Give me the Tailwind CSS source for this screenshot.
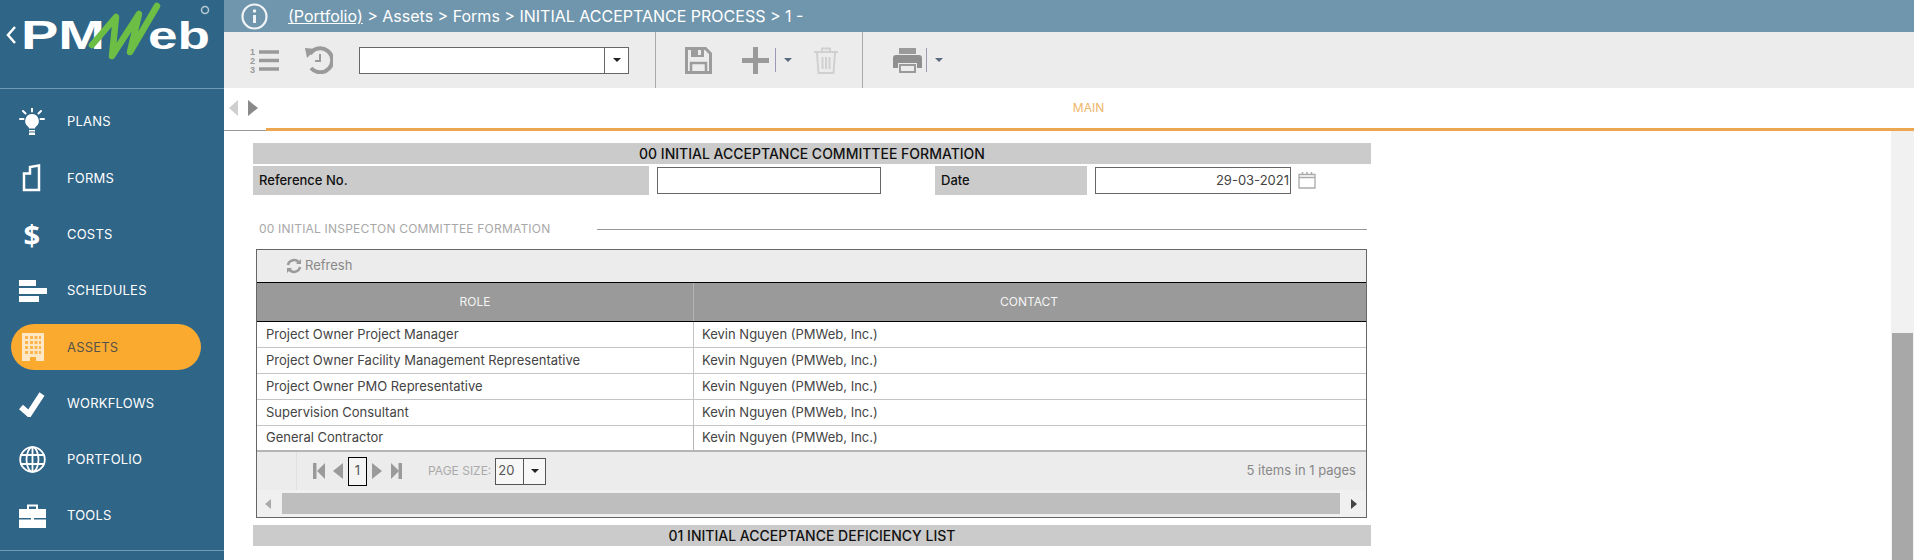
<!DOCTYPE html>
<html lang="en">
<head>
    <meta charset="UTF-8">
    <title>PMWeb - Initial Acceptance Process</title>
    <script src="https://cdn.jsdelivr.net/npm/@tailwindcss/browser@4"></script>
</head>
<body class="h-[560px] overflow-hidden bg-white font-['Inter',sans-serif] text-[#333]">
<div class="flex h-[560px]">

    <!-- Sidebar -->
    <aside class="w-[224px] shrink-0 bg-[#2f6587] text-white">
        <div class="h-[89px] border-b border-[#6f9ab3]">
            <svg width="224" height="88" viewBox="0 0 224 88">
                <path d="M15 27 L8 35 L15 43" fill="none" stroke="#fff" stroke-width="2.5"/>
                <text x="21" y="49" font-family="Liberation Sans" font-weight="700" font-size="40" fill="#fff" textLength="84" lengthAdjust="spacingAndGlyphs">PM</text>
                <text x="148" y="49" font-family="Liberation Sans" font-weight="700" font-size="38" fill="#fff" textLength="62" lengthAdjust="spacingAndGlyphs">eb</text>
                <path d="M92 45 L116 17 L112 56 L139 14 L130 52 L157 6" fill="none" stroke="#6cbe45" stroke-width="6.5" stroke-linejoin="round" stroke-linecap="round"/>
                <circle cx="205" cy="10" r="3.5" fill="none" stroke="#b8c9d4" stroke-width="1.5"/>
            </svg>
        </div>
        <nav class="pt-[5px] text-[13px] font-normal tracking-[0.2px]">
            <div class="flex h-[56.3px] items-center pl-[19px]">
                <svg class="w-[26px] h-[28px] mr-[22px]" viewBox="0 0 26 28" fill="#fff"><path d="M13 6a7 7 0 0 0-4 12.6c.7.6 1 1.2 1 2h6c0-.8.3-1.4 1-2A7 7 0 0 0 13 6zM10 22h6v1.500h-6zM10 24.500h6V27h-6z"/><path d="M13 0v3.500M4 3l2.500 2.500M22 3l-2.500 2.500M1 11h3.500M21.500 11H25" stroke="#fff" stroke-width="2" stroke-linecap="round"/></svg>
                <span>PLANS</span>
            </div>
            <div class="flex h-[56.3px] items-center pl-[19px]">
                <svg class="w-[26px] h-[28px] mr-[22px]" viewBox="0 0 26 28"><path d="M5 9.500 L11 9.500 L11 3 L20 1.500 L20 26 L5 26 Z" transform="translate(0 0)" fill="none" stroke="#fff" stroke-width="2.500"/></svg>
                <span>FORMS</span>
            </div>
            <div class="flex h-[56.3px] items-center pl-[19px]">
                <span class="w-[26px] mr-[22px] text-center text-[29px] font-bold leading-none font-['Open_Sans',sans-serif]">$</span>
                <span>COSTS</span>
            </div>
            <div class="flex h-[56.3px] items-center pl-[19px]">
                <svg class="w-[28px] h-[23px] mr-[20px]" viewBox="0 0 28 23" fill="#fff"><rect x="0" y="0" width="17" height="6"/><rect x="0" y="8" width="28" height="6"/><rect x="0" y="16" width="20" height="6"/></svg>
                <span>SCHEDULES</span>
            </div>
            <div class="flex h-[56.3px] items-center pl-[11px]">
                <div class="flex h-[46px] w-[190px] items-center rounded-full bg-[#fbaa30] pl-[11px] text-[#55544a]">
                    <svg class="w-[22px] h-[28px] mr-[23px]" viewBox="0 0 22 28"><path fill="#fde7c4" d="M0 0h22v28h-8v-4h-6v4H0z"/><path fill="#fbb64e" d="M3 3h3v3H3zM8 3h3v3H8zM12.500 3h3v3h-3zM17 3h2v3h-2zM3 8h3v3H3zM8 8h3v3H8zM12.500 8h3v3h-3zM17 8h2v3h-2zM3 13h3v3H3zM8 13h3v3H8zM12.500 13h3v3h-3zM17 13h2v3h-2zM3 18h3v3H3zM8 18h3v3H8zM12.500 18h3v3h-3zM17 18h2v3h-2z"/></svg>
                    <span>ASSETS</span>
                </div>
            </div>
            <div class="flex h-[56.3px] items-center pl-[19px]">
                <svg class="w-[26px] h-[26px] mr-[22px]" viewBox="0 0 26 26"><path d="M2 16 L10 23 L23 3" fill="none" stroke="#fff" stroke-width="6"/></svg>
                <span>WORKFLOWS</span>
            </div>
            <div class="flex h-[56.3px] items-center pl-[19px]">
                <svg class="w-[27px] h-[27px] mr-[21px]" viewBox="0 0 27 27" fill="none" stroke="#fff" stroke-width="1.800"><circle cx="13.500" cy="13.500" r="12.300"/><ellipse cx="13.500" cy="13.500" rx="6" ry="12.300"/><path d="M13.500 1v25M1.500 9h24M1.500 18h24"/></svg>
                <span>PORTFOLIO</span>
            </div>
            <div class="flex h-[56.3px] items-center pl-[19px]">
                <svg class="w-[27px] h-[24px] mr-[21px]" viewBox="0 0 27 24" fill="#fff"><path d="M0 5h27v9H0zM0 15.500h27V24H0z"/><path d="M9 5V1.500h9V5" fill="none" stroke="#fff" stroke-width="2"/><rect x="12" y="13" width="3" height="3"/></svg>
                <span>TOOLS</span>
            </div>
        </nav>
        <div class="mt-[6px] border-t border-[#6f9ab3]"></div>
    </aside>

    <div class="flex min-w-0 flex-1 flex-col">
        <!-- Breadcrumb -->
        <header class="flex h-[32px] items-center bg-[#7096ad] pl-[17px] text-[16px] text-white">
            <svg class="w-[27px] h-[27px] mr-[20px]" viewBox="0 0 27 27" fill="none"><circle cx="13.500" cy="13.500" r="12" stroke="#f2f5f7" stroke-width="2.200"/><circle cx="13.500" cy="8" r="1.700" fill="#f2f5f7"/><path d="M13.500 12v8" stroke="#f2f5f7" stroke-width="3"/></svg>
            <span><u>(Portfolio)</u> &gt; Assets &gt; Forms &gt; INITIAL ACCEPTANCE PROCESS &gt; 1 -</span>
        </header>

        <!-- Toolbar -->
        <div class="flex h-[56px] items-center bg-[#ececec] pl-[26px]">
            <svg class="w-[29px] h-[27px] mr-[25px]" viewBox="0 0 29 27"><text x="0" y="8" font-family="Liberation Sans" font-size="9" font-weight="700" fill="#9a9a9a">1</text><text x="0" y="17" font-family="Liberation Sans" font-size="9" font-weight="700" fill="#9a9a9a">2</text><text x="0" y="26" font-family="Liberation Sans" font-size="9" font-weight="700" fill="#9a9a9a">3</text><path d="M9 5h20M9 13.500h20M9 22h20" stroke="#9a9a9a" stroke-width="3.500"/></svg>
            <svg class="w-[29px] h-[28px] mr-[26px]" viewBox="0 0 29 28" fill="none"><path d="M6 8a12 12 0 1 1 1 14" stroke="#9a9a9a" stroke-width="4"/><path d="M1 2l11 1-9 9z" fill="#9a9a9a"/><path d="M16 8v7h-5" stroke="#9a9a9a" stroke-width="2"/></svg>
            <div class="flex h-[27px] w-[270px] border border-[#666] bg-white">
                <div class="flex-1 border-r border-[#666]"></div>
                <div class="flex w-[23px] items-center justify-center"><div class="h-0 w-0 border-x-[4px] border-t-[4px] border-x-transparent border-t-[#222]"></div></div>
            </div>
            <div class="ml-[26px] h-[56px] border-l border-[#a9a9a9]"></div>
            <svg class="ml-[29px] w-[27px] h-[27px]" viewBox="0 0 27 27" fill="none"><path d="M1.500 1.500h19l5 5v19h-24z" stroke="#9c9c9c" stroke-width="3"/><path d="M6 2h13v8H6z" fill="#9c9c9c"/><rect x="13" y="3" width="3" height="5" fill="#ececec"/><path d="M6 25v-9h15v9" stroke="#9c9c9c" stroke-width="2.500"/></svg>
            <svg class="ml-[30px] w-[27px] h-[27px]" viewBox="0 0 27 27"><path d="M0 13.500h27M13.500 0v27" stroke="#9a9a9a" stroke-width="5"/></svg>
            <div class="ml-[6px] h-[24px] border-l border-[#9a9ab5]"></div>
            <div class="ml-[8px] h-0 w-0 border-x-[4px] border-t-[4px] border-x-transparent border-t-[#5c6a80]"></div>
            <svg class="ml-[22px] w-[24px] h-[27px]" viewBox="0 0 24 27" fill="none" stroke="#d0d0d0" stroke-width="2"><path d="M0 5h24M8 5V1.500h8V5M3 6l1.500 20h15L21 6M8.500 10v12M12 10v12M15.500 10v12"/></svg>
            <div class="ml-[24px] h-[56px] border-l border-[#a9a9a9]"></div>
            <svg class="ml-[30px] w-[29px] h-[25px]" viewBox="0 0 29 25"><path d="M6 0h17v6H6z" fill="#9a9a9a"/><path d="M3 7h23a3 3 0 0 1 3 3v10h-5v-5H5v5H0V10a3 3 0 0 1 3-3z" fill="#8f8f8f"/><path d="M7 17h15v7H7z" fill="none" stroke="#9a9a9a" stroke-width="2"/></svg>
            <div class="ml-[4px] h-[24px] border-l border-[#9a9ab5]"></div>
            <div class="ml-[8px] h-0 w-0 border-x-[4px] border-t-[4px] border-x-transparent border-t-[#5c6a80]"></div>
        </div>

        <!-- Tab strip -->
        <div class="flex h-[43px] shrink-0 bg-white">
            <div class="flex w-[42px] items-center border-b border-[#999] pb-[2px] pl-[5px]">
                <div class="h-0 w-0 border-y-[8px] border-r-[9px] border-y-transparent border-r-[#cfcfcf]"></div>
                <div class="ml-[10px] h-0 w-0 border-y-[8px] border-l-[10px] border-y-transparent border-l-[#8a8a8a]"></div>
            </div>
            <div class="flex flex-1 items-center justify-center border-b-[3px] border-[#eba64f] pr-[3px] text-[12px] text-[#eeb56c]">MAIN</div>
        </div>

        <div class="flex min-h-0 flex-1">
            <!-- Form -->
            <main class="flex-1 overflow-hidden pl-[29px] pt-[12px]">
                <div class="w-[1118px]">
                    <div class="flex h-[21px] items-center justify-center bg-[#cbcbcb] text-[14px] font-medium text-[#111]">00 INITIAL ACCEPTANCE COMMITTEE FORMATION</div>
                    <div class="mt-[2px] flex h-[29px] items-start text-[13px]">
                        <div class="flex h-[29px] w-[396px] items-center bg-[#cbcbcb] pl-[6px] font-medium text-[#111]">Reference No.</div>
                        <div class="ml-[8px] mt-[1px] h-[27px] w-[224px] border border-[#666] bg-white"></div>
                        <div class="ml-[54px] flex h-[29px] w-[152px] items-center bg-[#cbcbcb] pl-[6px] font-medium text-[#111]">Date</div>
                        <div class="ml-[8px] mt-[1px] flex h-[27px] w-[196px] items-center justify-end border border-[#666] bg-white pr-[1px] text-[#444]">29-03-2021</div>
                        <svg class="ml-[7px] mt-[5px] w-[18px] h-[18px]" viewBox="0 0 18 18" fill="none" stroke="#aaa" stroke-width="1.300"><path d="M1 3.500h16V17H1zM1 6.500h16"/><path d="M4.500 1v3M9 1v3M13.500 1v3" stroke-width="1.500"/></svg>
                    </div>
                    <div class="mt-[24px] flex h-[20px] items-center pl-[6px] text-[12px] tracking-[0.2px] text-[#a8a8a8]">
                        <span class="w-[338px] whitespace-nowrap">00 INITIAL INSPECTON COMMITTEE FORMATION</span>
                        <div class="w-[770px] border-t border-[#999]"></div>
                    </div>

                    <!-- Grid -->
                    <div class="ml-[3px] mt-[10px] w-[1111px] border border-[#666] text-[13px]">
                        <div class="flex h-[32px] items-center bg-[#ececec] pl-[29px] text-[#888]">
                            <svg class="mr-[3px] w-[16px] h-[16px]" viewBox="0 0 16 16" fill="none" stroke="#9a9a9a" stroke-width="2.500"><path d="M2 7a6 6 0 0 1 11-2M14 9a6 6 0 0 1-11 2"/><path d="M15 1v5h-5zM1 15v-5h5z" fill="#9a9a9a" stroke="none"/></svg>
                            <span>Refresh</span>
                        </div>
                        <div class="grid h-[40px] grid-cols-[437px_1fr] border-y border-black bg-[#9a9a9a] text-[12px] text-[#f4f4f4]">
                            <div class="flex items-center justify-center border-r border-[#b5b5b5]">ROLE</div>
                            <div class="flex items-center justify-center pr-[2px]">CONTACT</div>
                        </div>
                        <div class="grid grid-cols-[437px_1fr] text-[#444]">
                            <div class="flex h-[26px] items-center border-r border-b border-[#c4c4c4] pl-[9px]">Project Owner Project Manager</div>
                            <div class="flex h-[26px] items-center border-b border-[#c4c4c4] pl-[8px]">Kevin Nguyen (PMWeb, Inc.)</div>
                            <div class="flex h-[26px] items-center border-r border-b border-[#c4c4c4] pl-[9px]">Project Owner Facility Management Representative</div>
                            <div class="flex h-[26px] items-center border-b border-[#c4c4c4] pl-[8px]">Kevin Nguyen (PMWeb, Inc.)</div>
                            <div class="flex h-[26px] items-center border-r border-b border-[#c4c4c4] pl-[9px]">Project Owner PMO Representative</div>
                            <div class="flex h-[26px] items-center border-b border-[#c4c4c4] pl-[8px]">Kevin Nguyen (PMWeb, Inc.)</div>
                            <div class="flex h-[26px] items-center border-r border-b border-[#c4c4c4] pl-[9px]">Supervision Consultant</div>
                            <div class="flex h-[26px] items-center border-b border-[#c4c4c4] pl-[8px]">Kevin Nguyen (PMWeb, Inc.)</div>
                            <div class="flex h-[26px] items-center border-r border-b-2 border-[#b5b5b5] pl-[9px]">General Contractor</div>
                            <div class="flex h-[26px] items-center border-b-2 border-[#b5b5b5] pl-[8px]">Kevin Nguyen (PMWeb, Inc.)</div>
                        </div>
                        <!-- Pager -->
                        <div class="flex h-[38px] items-center bg-[#ececec] pr-[10px]">
                            <div class="h-[38px] w-[40px] border-r border-[#e0e0e0]"></div>
                            <svg class="ml-[16px] w-[12px] h-[16px]" viewBox="0 0 12 16" fill="#9a9a9a"><rect width="3.500" height="16"/><path d="M12 0v16L4 8z"/></svg>
                            <svg class="ml-[8px] w-[10px] h-[16px]" viewBox="0 0 10 16" fill="#9a9a9a"><path d="M10 0v16L0 8z"/></svg>
                            <div class="ml-[5px] flex h-[29px] w-[19px] items-center justify-center border border-black bg-[#f4f4f4] text-[#555]">1</div>
                            <svg class="ml-[5px] w-[10px] h-[16px]" viewBox="0 0 10 16" fill="#9a9a9a"><path d="M0 0v16l10-8z"/></svg>
                            <svg class="ml-[9px] w-[11px] h-[16px]" viewBox="0 0 11 16" fill="#9a9a9a"><path d="M0 0v16l8-8z"/><rect x="7.500" width="3.500" height="16"/></svg>
                            <span class="ml-[26px] text-[12px] text-[#aaa]">PAGE SIZE:</span>
                            <div class="ml-[4px] flex h-[27px] w-[51px] border border-[#555] bg-[#f7f7f7] text-[#555]">
                                <div class="flex w-[28px] items-center border-r border-[#555] pl-[2px]">20</div>
                                <div class="flex flex-1 items-center justify-center"><div class="h-0 w-0 border-x-[4px] border-t-[4px] border-x-transparent border-t-[#222]"></div></div>
                            </div>
                            <span class="ml-auto text-[#888]">5 items in 1 pages</span>
                        </div>
                        <!-- Horizontal scroller -->
                        <div class="flex h-[27px] items-center bg-[#f0f0f0]">
                            <div class="ml-[8px] h-0 w-0 border-y-[5px] border-r-[6px] border-y-transparent border-r-[#aaa]"></div>
                            <div class="ml-[11px] h-[21px] w-[1058px] bg-[#bebebe]"></div>
                            <div class="ml-[11px] h-0 w-0 border-y-[5px] border-l-[6px] border-y-transparent border-l-[#444]"></div>
                        </div>
                    </div>

                    <div class="mt-[7px] flex h-[21px] items-center justify-center bg-[#cbcbcb] text-[14px] font-medium text-[#111]">01 INITIAL ACCEPTANCE DEFICIENCY LIST</div>
                </div>
            </main>
            <!-- Page scrollbar -->
            <div class="flex w-[23px] shrink-0 flex-col bg-[#f1f1f1] pl-[1px] pr-[1px]">
                <div class="mt-[202px] flex-1 bg-[#a8a8a8]"></div>
            </div>
        </div>
    </div>
</div>
</body>
</html>
